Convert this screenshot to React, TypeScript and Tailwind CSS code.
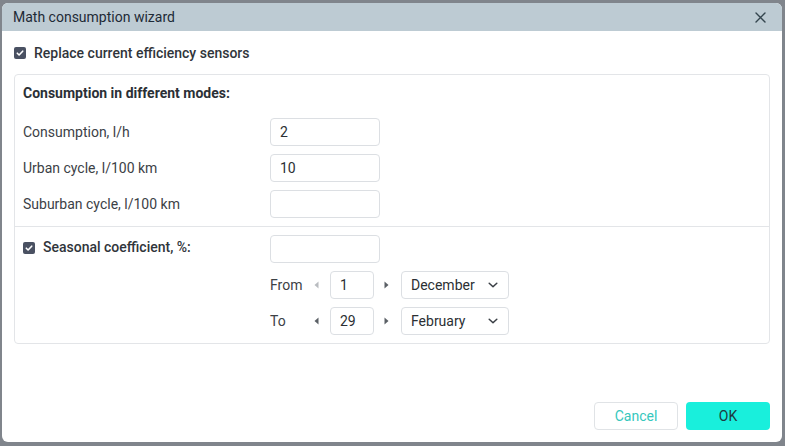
import React from "react";

function Check() {
  return (
    <span className="flex h-[12px] w-[12px] shrink-0 items-center justify-center rounded-[2px] bg-[#4a5162]">
      <svg width="8" height="8" viewBox="0 0 8 8" fill="none" aria-hidden>
        <path d="M1.3 4.2 3.1 6 6.7 2.2" stroke="#fff" strokeWidth="1.6" strokeLinecap="round" strokeLinejoin="round" />
      </svg>
    </span>
  );
}

function Field({ value = "", className = "w-[110px]" }: { value?: string; className?: string }) {
  return (
    <div className={`flex h-[28px] items-center rounded-[4px] border border-[#dcdfe3] bg-white px-[9px] text-[14px] text-[#2b2f33] ${className}`}>
      {value}
    </div>
  );
}

function Arrow({ dir, muted }: { dir: "left" | "right"; muted?: boolean }) {
  return (
    <span className="flex w-[20px] justify-center">
      <svg width="5" height="8" viewBox="0 0 5 8" aria-hidden>
        <path
          d={dir === "left" ? "M4.5 0.5 0.5 4 4.5 7.5Z" : "M0.5 0.5 4.5 4 0.5 7.5Z"}
          fill={muted ? "#b9bcc0" : "#5b6066"}
        />
      </svg>
    </span>
  );
}

function Select({ value }: { value: string }) {
  return (
    <div className="ml-[5px] flex h-[28px] w-[108px] items-center justify-between rounded-[4px] border border-[#dcdfe3] bg-white pl-[9px] pr-[10px] text-[14px] text-[#2b2f33]">
      <span>{value}</span>
      <svg width="10" height="6" viewBox="0 0 10 6" fill="none" aria-hidden>
        <path d="M1.2 1.2 5 4.8 8.8 1.2" stroke="#3a3f45" strokeWidth="1.5" strokeLinecap="round" strokeLinejoin="round" />
      </svg>
    </div>
  );
}

function DateRow({ label, day, month, mutedLeft }: { label: string; day: string; month: string; mutedLeft?: boolean }) {
  return (
    <div className="flex h-[28px] items-center">
      <span className="w-[36px] text-[14px] text-[#3c4146]">{label}</span>
      <Arrow dir="left" muted={mutedLeft} />
      <Field value={day} className="ml-[4px] w-[44px]" />
      <span className="ml-[2px]">
        <Arrow dir="right" />
      </span>
      <Select value={month} />
    </div>
  );
}

const rows = [
  { label: "Consumption, l/h", value: "2" },
  { label: "Urban cycle, l/100 km", value: "10" },
  { label: "Suburban cycle, l/100 km", value: "" },
];

export default function App() {
  return (
    <div
      className="h-[446px] w-[785px] bg-[#80858c] pb-[4px] pl-[2px] pr-[3px] pt-[3px]"
      style={{ fontFamily: "Roboto, 'Liberation Sans', sans-serif" }}
    >
      <div className="flex h-full flex-col overflow-hidden rounded-[6px] bg-white">
        {/* Header */}
        <div className="flex h-[28px] shrink-0 items-center justify-between bg-[#bdcbd3] pl-[11px] pr-[16px]">
          <span className="text-[14px] text-[#1d2a36]">Math consumption wizard</span>
          <svg width="11" height="11" viewBox="0 0 11 11" fill="none" aria-hidden>
            <path d="M1 1l9 9M10 1l-9 9" stroke="#34454e" strokeWidth="1.4" strokeLinecap="round" />
          </svg>
        </div>

        {/* Body */}
        <div className="flex flex-1 flex-col px-[12px]">
          <div className="flex h-[43px] items-center gap-[8px] pt-[1px]">
            <Check />
            <span className="text-[14px] font-medium text-[#30353b]">Replace current efficiency sensors</span>
          </div>

          <div className="rounded-[4px] border border-[#e3e5e8]">
            <div className="px-[8px] pb-[8px] pt-[8px]">
              <div className="h-[20px] text-[14px] font-bold leading-[20px] text-[#2b3036]">
                Consumption in different modes:
              </div>
              <div className="mt-[15px] flex flex-col gap-[8px]">
                {rows.map((r) => (
                  <div key={r.label} className="flex items-center">
                    <span className="w-[247px] text-[14px] text-[#3c4146]">{r.label}</span>
                    <Field value={r.value} />
                  </div>
                ))}
              </div>
            </div>

            <div className="border-t border-[#e3e5e8] px-[8px] pb-[8px] pt-[8px]">
              <div className="flex flex-col gap-[8px]">
                <div className="flex items-center">
                  <div className="flex w-[247px] items-center gap-[8px] pb-[3px]">
                    <Check />
                    <span className="text-[14px] font-medium text-[#30353b]">Seasonal coefficient, %:</span>
                  </div>
                  <Field />
                </div>
                <div className="pl-[247px]">
                  <DateRow label="From" day="1" month="December" mutedLeft />
                </div>
                <div className="pl-[247px]">
                  <DateRow label="To" day="29" month="February" />
                </div>
              </div>
            </div>
          </div>

          {/* Footer */}
          <div className="mt-auto flex justify-end gap-[8px] pb-[12px]">
            <button className="h-[28px] w-[84px] rounded-[4px] border border-[#e0e3e6] bg-white text-[14px] text-[#36c7bd]">
              Cancel
            </button>
            <button className="h-[28px] w-[84px] rounded-[4px] bg-[#19efdc] text-[14px] text-[#1e3a40]">
              OK
            </button>
          </div>
        </div>
      </div>
    </div>
  );
}
